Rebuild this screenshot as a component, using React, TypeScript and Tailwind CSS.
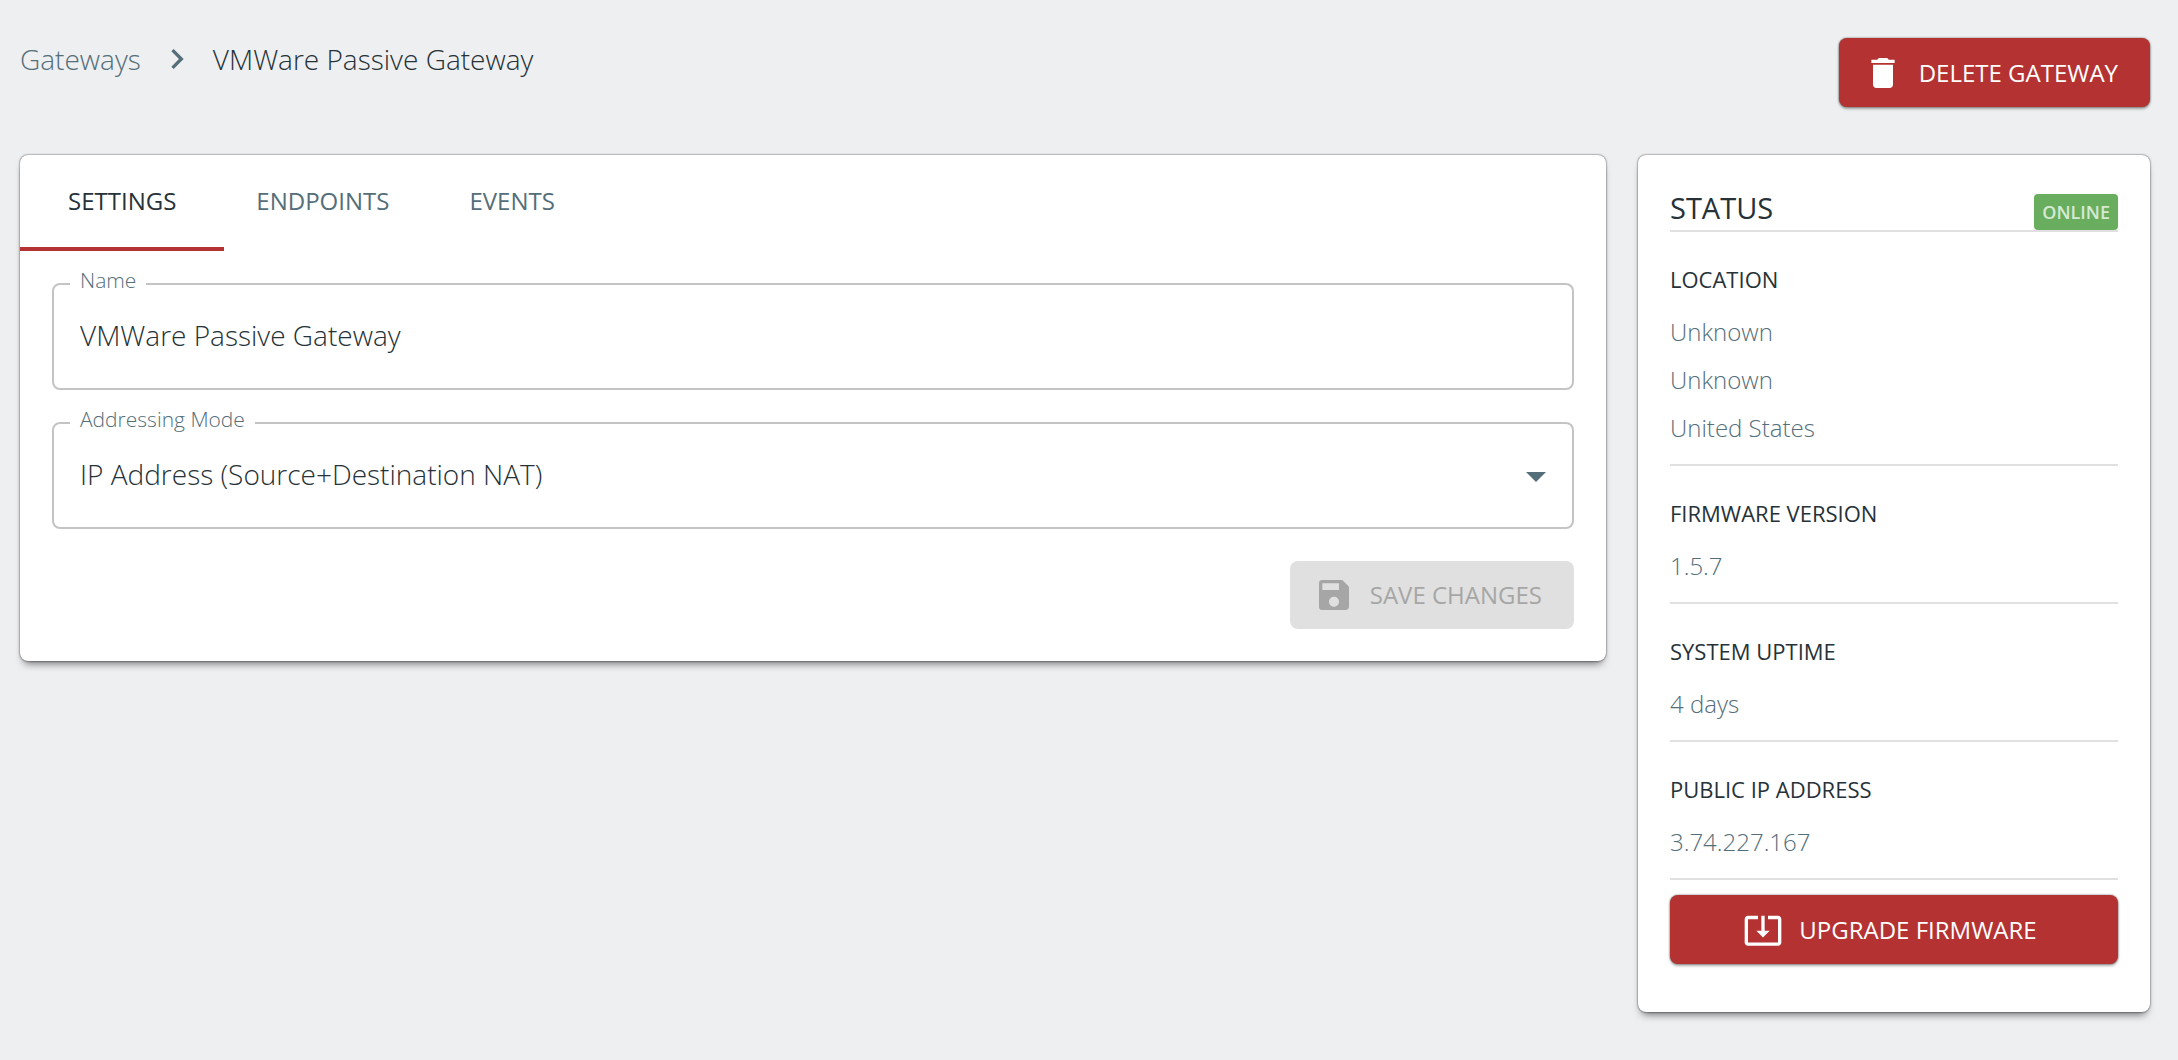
import { ReactNode, useState } from 'react'
import { MdArrowDropDown, MdChevronRight, MdDelete, MdSave, MdSystemUpdateAlt } from 'react-icons/md'

const tabs = ['Settings', 'Endpoints', 'Events']

const details = [
  { label: 'Location', values: ['Unknown', 'Unknown', 'United States'] },
  { label: 'Firmware Version', values: ['1.5.7'] },
  { label: 'System Uptime', values: ['4 days'] },
  { label: 'Public IP Address', values: ['3.74.227.167'] },
]

const addressingModes = ['IP Address (Source+Destination NAT)', 'IP Address (Source NAT)', 'Hostname']

const fieldClass =
  'block w-full h-[107px] appearance-none rounded-lg border-2 border-[#c4c4c4] bg-white px-[26px] pb-1 text-[28px] font-light text-[#263238] outline-none focus:border-[#b53232]'

const redButtonClass =
  'flex h-[69px] items-center justify-center gap-4 rounded-lg bg-[#b53232] pl-6 pr-8 text-2xl text-white uppercase whitespace-nowrap shadow-[0_0_2px_rgba(0,0,0,0.6),0_2px_3px_rgba(0,0,0,0.3)] hover:bg-[#9c2a2a]'

function Card({ className = '', children }: { className?: string; children: ReactNode }) {
  return (
    <div className={`rounded-lg bg-white shadow-[0_0_2px_rgba(0,0,0,0.8),0_6px_8px_-4px_rgba(0,0,0,0.6)] ${className}`}>
      {children}
    </div>
  )
}

function Field({ id, label, children }: { id: string; label: string; children: ReactNode }) {
  return (
    <div className="relative">
      {children}
      <label
        htmlFor={id}
        className="absolute -top-[17px] left-[18px] bg-white px-[10px] text-[21px] leading-7 font-light text-[#546e7a]"
      >
        {label}
      </label>
    </div>
  )
}

export default function App() {
  const [tab, setTab] = useState('Settings')
  const [name, setName] = useState('VMWare Passive Gateway')
  const [mode, setMode] = useState(addressingModes[0])
  const dirty = name !== 'VMWare Passive Gateway' || mode !== addressingModes[0]

  return (
    <div className="min-h-screen bg-[#eeeff1] pt-[38px] pr-7 pb-12 pl-5 font-['Open_Sans',sans-serif] text-[#263238]">
      <header className="flex items-start justify-between">
        <nav aria-label="Breadcrumb" className="flex items-center gap-4 text-[28px] leading-[42px] font-light">
          <a href="#gateways" className="text-[#546e7a]">Gateways</a>
          <MdChevronRight className="size-10 text-[#546e7a]" />
          <span>VMWare Passive Gateway</span>
        </nav>
        <button type="button" className={redButtonClass}>
          <MdDelete className="size-10" />
          Delete Gateway
        </button>
      </header>

      <main className="mt-12 flex items-start gap-8">
        <Card className="min-w-0 flex-1">
          <div role="tablist" className="flex">
            {tabs.map(t => (
              <button
                key={t}
                type="button"
                role="tab"
                aria-selected={t === tab}
                onClick={() => setTab(t)}
                className={
                  t === tab
                    ? 'h-24 border-b-4 border-[#b53232] px-12 text-2xl uppercase'
                    : 'ml-8 mr-12 h-24 border-b-4 border-transparent text-2xl text-[#546e7a] uppercase'
                }
              >
                {t}
              </button>
            ))}
          </div>
          <form className="flex flex-col gap-8 p-8">
            <Field id="name" label="Name">
              <input id="name" type="text" value={name} onChange={e => setName(e.target.value)} className={fieldClass} />
            </Field>
            <Field id="mode" label="Addressing Mode">
              <select id="mode" value={mode} onChange={e => setMode(e.target.value)} className={fieldClass}>
                {addressingModes.map(m => (
                  <option key={m}>{m}</option>
                ))}
              </select>
              <MdArrowDropDown className="pointer-events-none absolute top-[30px] right-[14px] size-12 text-[#546e7a]" />
            </Field>
            <button
              type="submit"
              disabled={!dirty}
              className="flex h-[68px] items-center gap-4 self-end rounded-lg bg-[#b53232] pl-6 pr-8 text-2xl text-white uppercase disabled:bg-[#e0e0e0] disabled:text-[#a6a6a6]"
            >
              <MdSave className="size-10" />
              Save Changes
            </button>
          </form>
        </Card>

        <Card className="w-[512px] shrink-0 px-8 pt-[31px] pb-12">
          <div className="flex items-end justify-between border-b-2 border-[#e0e0e0]">
            <h2 className="text-[29px] leading-[44px] uppercase">Status</h2>
            <span className="rounded bg-[#69ad5e] px-2 text-lg leading-9 font-semibold text-[#d5ead2] uppercase">
              Online
            </span>
          </div>
          {details.map(d => (
            <section key={d.label} className="border-b-2 border-[#e0e0e0] pt-[31px] pb-3">
              <h3 className="mb-[13px] text-[22px] leading-8 uppercase">{d.label}</h3>
              {d.values.map((v, i) => (
                <p key={i} className="text-2xl leading-[48px] font-light text-[#546e7a]">{v}</p>
              ))}
            </section>
          ))}
          <button type="button" className={`mt-[15px] w-full ${redButtonClass}`}>
            <MdSystemUpdateAlt className="size-10" />
            Upgrade Firmware
          </button>
        </Card>
      </main>
    </div>
  )
}
